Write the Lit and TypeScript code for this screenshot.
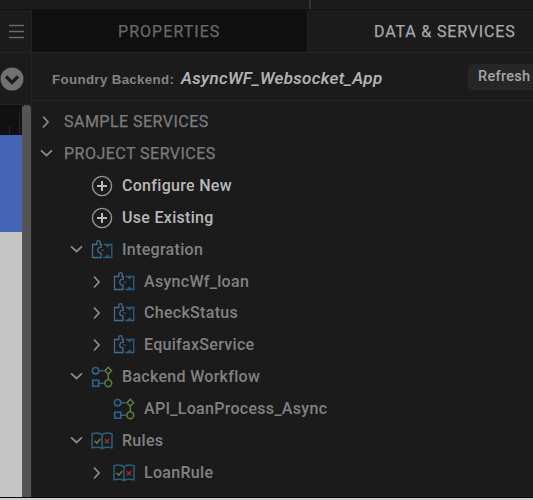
import { LitElement, html, css, svg, nothing } from "lit";
import { customElement } from "lit/decorators.js";
import { classMap } from "lit/directives/class-map.js";

type Row = {
  label: string;
  level: number;
  arrow?: "right" | "down";
  icon?: "plus" | "puzzle" | "flow" | "rules";
  tone?: string;
};

const ROWS: Row[] = [
  { label: "SAMPLE SERVICES", level: 0, arrow: "right", tone: "caps" },
  { label: "PROJECT SERVICES", level: 0, arrow: "down", tone: "caps" },
  { label: "Configure New", level: 1, icon: "plus", tone: "action" },
  { label: "Use Existing", level: 1, icon: "plus", tone: "action" },
  { label: "Integration", level: 1, arrow: "down", icon: "puzzle" },
  { label: "AsyncWf_loan", level: 2, arrow: "right", icon: "puzzle" },
  { label: "CheckStatus", level: 2, arrow: "right", icon: "puzzle" },
  { label: "EquifaxService", level: 2, arrow: "right", icon: "puzzle" },
  { label: "Backend Workflow", level: 1, arrow: "down", icon: "flow" },
  { label: "API_LoanProcess_Async", level: 2, icon: "flow" },
  { label: "Rules", level: 1, arrow: "down", icon: "rules" },
  { label: "LoanRule", level: 2, arrow: "right", icon: "rules" },
];

const ICONS = {
  plus: svg`
    <circle cx="11" cy="11" r="9.6" stroke="#969696" stroke-width="1.4"/>
    <path d="M11 6v10M6 11h10" stroke="#b8b8b8" stroke-width="2"/>`,
  puzzle: svg`
    <path d="M9.5 18.5H1.5V5.5H5.8V3.4a1.7 1.7 0 0 1 3.4 0V5.5H10.3V8.2C7.6 8 6.8 9.700 6.800 11.200s.8 3 3.200 2.900v4.400z" stroke="#41708a" stroke-width="1.300"/>
    <path d="M12.800 5.500h8v13h-8.500M10.300 11.200h2.500" stroke="#2b6083" stroke-width="1.300"/>
    <path d="M14.500 5.500h4v1.500l-2 1.600-2-1.600zM14.500 18.500h4v-1.500l-2-1.600-2 1.600z" fill="#265576"/>`,
  flow: svg`
    <circle cx="4.6" cy="4.7" r="3.2" stroke="#2c668c" stroke-width="1.6"/>
    <path d="M8.4 4.7h4.2M8.5 17.3h4.2M1.7 14.3h6v6h-6z" stroke="#2c668c" stroke-width="1.6"/>
    <path d="M17.3 1.2l3.3 3.5-3.3 3.5L14 4.7zM17.3 8.4v5.2" stroke="#5f7e35" stroke-width="1.5"/>
    <circle cx="17.3" cy="17.2" r="3.4" stroke="#5f7e35" stroke-width="1.6"/>`,
  rules: svg`
    <path d="M11 18.5C8.5 17 5 16.8 1 17.8V3.7C5 2.7 9 3 11 5v13.5C13.5 17 17 16.8 21 17.8V3.7C17 2.7 13 3 11 5" stroke="#285f7c" stroke-width="1.5"/>
    <path d="M3.5 11l2.3 2.2L9.3 9" stroke="#638039" stroke-width="1.6"/>
    <path d="M14 9.2l4 4M18 9.2l-4 4" stroke="#a02b31" stroke-width="1.5"/>`,
};

@customElement("app-root")
export class AppRoot extends LitElement {
  static styles = css`
    :host {
      display: flex;
      flex-direction: column;
      width: 533px;
      height: 500px;
      overflow: hidden;
      background: #1b1b1b;
      color: #818181;
      font: 500 16px/20px Roboto, "Liberation Sans", sans-serif;
      white-space: nowrap;
    }
    * { box-sizing: border-box; }
    svg { display: block; fill: none; flex: none; }
    .strip { height: 10px; flex: none; display: flex; border-bottom: 1px solid #121212; }
    .strip i { width: 2px; height: 9px; margin-left: 309px; background: #333; }
    .body { display: flex; height: 487px; flex: none; }
    .left { width: 32px; border-right: 1px solid #222; display: flex; flex-direction: column; }
    .menu { height: 43px; padding: 13px 0 0 8px; border-bottom: 1px solid #242424; }
    .drop { height: 52px; padding: 14px 0 0 0; border-bottom: 1px solid #232323; }
    .canvas { flex: 1; display: flex; }
    .page { width: 22px; background: linear-gradient(#111 0 30px, #4463b3 30px 127px, #c6c6c6 127px); }
    .ticks { height: 30px; position: relative; }
    .ticks i { position: absolute; width: 1px; background: #292929; }
    .ticks .a { left: 9px; top: 21px; height: 8px; }
    .ticks .b { left: 19px; top: 8px; height: 21px; }
    .thumb { width: 9px; background: #545454; border-radius: 4px 4px 0 0; }
    .panel { flex: 1; }
    .tabs { display: flex; height: 43px; border-bottom: 1px solid #242424; }
    .tab { display: flex; align-items: center; padding-top: 2px; font-weight: 400; }
    .off { width: 276px; padding-left: 86px; background: #0f0f0f; color: #696969; border-right: 1px solid #232323; letter-spacing: 1.05px; -webkit-text-stroke: .25px #696969; }
    .on { width: 225px; padding-left: 66px; color: #a8a8a8; letter-spacing: .85px; -webkit-text-stroke: .25px #a8a8a8; }
    .backend { display: flex; height: 48px; border-bottom: 1px solid #242424; padding-left: 20px; }
    .key { width: 129px; padding-top: 17px; color: #838383; font: bold 13.3px/20px "Liberation Sans", sans-serif; letter-spacing: .35px; }
    .app { width: 287px; padding-top: 15px; color: #b5b5b5; font-style: italic; font-size: 17px; letter-spacing: .33px; -webkit-text-stroke: .1px #b5b5b5; }
    .btn { margin-top: 11px; width: 80px; flex: none; height: 26px; padding-left: 10px; border-radius: 5px; background: #262626; color: #a5a5a5; font-size: 14.5px; line-height: 25px; letter-spacing: .3px; }
    .tree { padding-top: 5.5px; }
    .row { display: flex; align-items: center; height: 31.85px; letter-spacing: .3px; }
    .arrow { width: 22px; margin-left: 4px; flex: none; }
    .l1 .arrow { margin-left: 34px; }
    .l2 .arrow { margin-left: 55px; }
    .icon { width: 22px; margin-right: 9px; }
    .l0 .label { margin-left: 6px; }
    .l1 .icon { margin-left: 3px; }
    .l2 .icon { margin-left: 4px; }
    .caps { color: #7c7c7c; font-weight: 400; letter-spacing: .48px; -webkit-text-stroke: .25px #7c7c7c; }
    .action { color: #b8b8b8; }
    .foot { height: 3px; background: #d0d0d0; border-top: 1px solid #090909; }
  `;

  private arrow(dir?: "right" | "down") {
    if (!dir) return nothing;
    const d = dir === "right" ? "M7 5.5l5 5.5-5 5.5" : "M5 7.3L10.5 12.5l5.5-5.2";
    return html`<svg width="22" height="22"><path d=${d} stroke="#8a8a8a" stroke-width="1.8"/></svg>`;
  }

  private row(r: Row) {
    const cls = { row: true, [`l${r.level}`]: true, [r.tone ?? "plain"]: true };
    return html`<div class=${classMap(cls)}>
      <span class="arrow">${this.arrow(r.arrow)}</span>
      ${r.icon ? html`<svg class="icon" width="22" height="22" viewBox="0 0 22 22">${ICONS[r.icon]}</svg>` : nothing}
      <span class="label">${r.label}</span>
    </div>`;
  }

  render() {
    return html`
      <div class="strip"><i></i></div>
      <div class="body">
        <div class="left">
          <div class="menu">
            <svg width="17" height="18"><path d="M1 2.5h15M1 8.5h15M1 14.5h15" stroke="#696969" stroke-width="1.4"/></svg>
          </div>
          <div class="drop">
            <svg width="24" height="24"><circle cx="12" cy="12" r="11.5" fill="#717171"/><path d="M6 9.5l6 6 6-6" stroke="#1b1b1b" stroke-width="3.2"/></svg>
          </div>
          <div class="canvas">
            <div class="page"><div class="ticks"><i class="a"></i><i class="b"></i></div></div>
            <div class="thumb"></div>
          </div>
        </div>
        <div class="panel">
          <div class="tabs"><div class="tab off">PROPERTIES</div><div class="tab on">DATA &amp; SERVICES</div></div>
          <div class="backend">
            <span class="key">Foundry Backend:</span><span class="app">AsyncWF_Websocket_App</span><span class="btn">Refresh</span>
          </div>
          <div class="tree">${ROWS.map((r) => this.row(r))}</div>
        </div>
      </div>
      <div class="foot"></div>`;
  }
}
